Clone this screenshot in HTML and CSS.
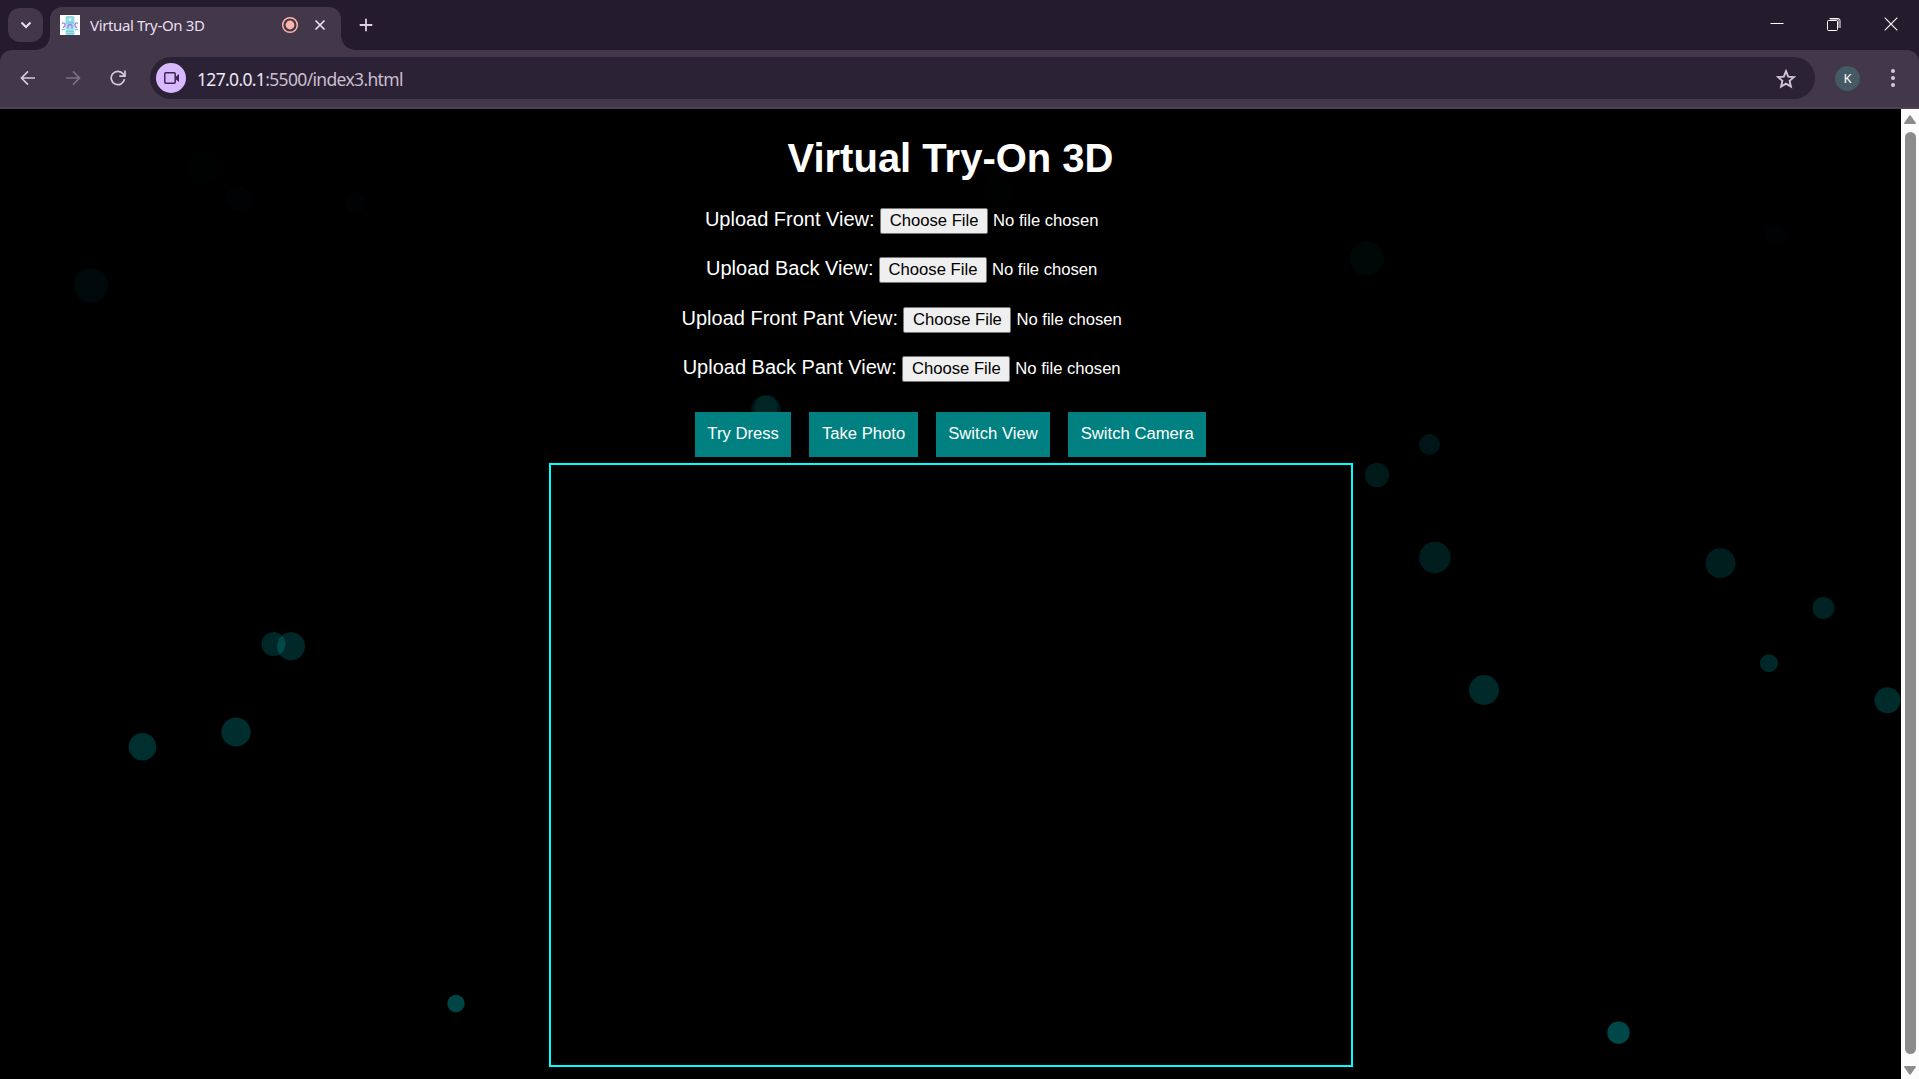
FILE: index.html
```html
<!DOCTYPE html>
<html lang="en">
<head>
<meta charset="utf-8">
<title>Virtual Try-On 3D</title>
<link rel="stylesheet" href="styles.css">
</head>
<body>
<div class="window">
  <header class="tabstrip">
    <button class="tab-search" aria-label="Search tabs"><svg width="12" height="8" viewBox="0 0 12 8"><path d="M1.500 1.500 6 6l4.500-4.500" fill="none" stroke="#e9dff0" stroke-width="2"/></svg></button>
    <div class="tab">
      <svg class="favicon" width="20" height="20" viewBox="0 0 20 20"><path fill="#fff" d="M0 0h20v20H0z"/><rect x="5.500" y="1" width="9" height="7" rx="2" fill="#8edbe3"/><path d="M5.500 8.500h9v10.500h-9z" fill="#a9e6ec"/><path d="M5.500 8h9M6 16.500h8M6 19h8M2 14.500h3M15 14.500h3" fill="none" stroke="#6fd0dc" stroke-width="1.300"/><circle cx="10" cy="4.500" r="1.500" fill="#dff6f8"/><path d="M2 8.500q2.500-1.500 3 1t-2 3M18 8.500q-2.500-1.500-3 1t2 3M8 13.500v-3q2-2 4 0v3" fill="none" stroke="#a578e8" stroke-width="1.300"/></svg>
      <span class="tab-title">Virtual Try-On 3D</span>
      <svg class="rec" width="18" height="18" viewBox="0 0 18 18"><circle cx="9" cy="9" r="7.300" fill="none" stroke="#ffb4ab" stroke-width="1.500"/><circle cx="9" cy="9" r="4.400" fill="#ffb4ab"/></svg>
      <svg class="tab-close" width="12" height="12" viewBox="0 0 12 12"><path d="m1.500 1.500 9 9m0-9-9 9" stroke="#e9dff0" stroke-width="1.700"/></svg>
    </div>
    <svg class="new-tab" width="14" height="14" viewBox="0 0 14 14"><path d="M7 .7v12.600M.7 7h12.600" stroke="#dccfe6" stroke-width="1.800"/></svg>
    <div class="controls">
      <svg width="14" height="14" viewBox="0 0 14 14"><path d="M.5 6.500h13" stroke="#fff"/></svg>
      <svg width="14" height="14" viewBox="0 0 14 14" fill="none" stroke="#fff"><path d="M3 2.500h8.500V11" stroke="#8d8792"/><rect x=".5" y="3.500" width="10" height="10" rx="1"/><path d="M2.500 1.500h8.500a2 2 0 0 1 2 2V11"/></svg>
      <svg width="14" height="14" viewBox="0 0 14 14"><path d="m.7.700 12.600 12.600m0-12.600L.7 13.300" stroke="#fff" stroke-width="1.100"/></svg>
    </div>
  </header>
  <nav class="toolbar">
    <svg class="back" width="16" height="16" viewBox="0 0 16 16"><path d="M15 8H2M8 1.300 1.500 8 8 14.700" fill="none" stroke="#d6c8e0" stroke-width="1.700"/></svg>
    <svg class="forward" width="16" height="16" viewBox="0 0 16 16"><path d="M1 8h13M8 1.300 14.500 8 8 14.700" fill="none" stroke="#7c7085" stroke-width="1.700"/></svg>
    <svg class="reload" width="16" height="16" viewBox="0 0 16 16"><path d="M14.500 9.200A6.700 6.700 0 1 1 13.300 4l1.400 1.700M15 .5v5.700H9.300" fill="none" stroke="#d6c8e0" stroke-width="1.700"/></svg>
    <div class="omnibox">
      <span class="camera"><svg width="17" height="14" viewBox="0 0 17 14"><rect x="1.800" y="1.800" width="10.400" height="10.400" rx="1" fill="none" stroke="#3b2652" stroke-width="1.500"/><path d="M12.500 6 16 3v8l-3.500-3z" fill="#3b2652"/></svg></span>
      <span class="url"><b>127.0.0.1</b>:5500/index3.html</span>
      <svg class="star" width="20" height="20" viewBox="0 0 20 20"><path d="m10 2.200 2.200 5.400 5.700.5-4.300 3.800 1.300 5.700-4.900-3-4.900 3 1.300-5.700L2.100 8.100l5.700-.5z" fill="none" stroke="#d0c4d8" stroke-width="1.900"/></svg>
    </div>
    <span class="avatar">K</span>
    <svg class="menu" width="4" height="18" viewBox="0 0 4 18" fill="#d6c8e0"><circle cx="2" cy="2" r="2"/><circle cx="2" cy="9" r="2"/><circle cx="2" cy="16" r="2"/></svg>
  </nav>
  <div class="viewport">
    <main class="page">
      <svg class="bubbles" width="1901" height="970" viewBox="0 109 1901 970">
        <circle cx="203" cy="168" r="17" fill="#000101"/><circle cx="238.500" cy="198.500" r="12.500" fill="#000203"/><circle cx="355" cy="202.500" r="10.500" fill="#000203"/>
        <circle cx="91" cy="285.500" r="17.300" fill="#00080a"/><circle cx="998" cy="191" r="15" fill="#000101"/>
        <circle cx="1367" cy="258.500" r="17.300" fill="#000707"/><circle cx="1775.500" cy="234.500" r="10.500" fill="#000304"/>
        <circle cx="766" cy="410" r="15" fill="#001515"/><circle cx="766" cy="407" r="11.500" fill="#002525"/>
        <circle cx="1429.500" cy="444.500" r="10.500" fill="#001517"/><circle cx="1377" cy="475" r="12.200" fill="#001a1a"/>
        <circle cx="1434.900" cy="557.500" r="15.700" fill="#001e1e"/><circle cx="1720.500" cy="563.200" r="15" fill="#001e1e"/>
        <circle cx="1823.500" cy="608" r="11" fill="#002222"/><circle cx="1769" cy="663.200" r="9" fill="#002828"/>
        <circle cx="1484" cy="690" r="15" fill="#002929"/><circle cx="1887.500" cy="700.300" r="13" fill="#002b2b"/>
        <circle cx="273.500" cy="644" r="12" fill="#002727"/><circle cx="291" cy="646.300" r="14" fill="#0ff" fill-opacity=".155"/>
        <circle cx="236" cy="732" r="14.600" fill="#002e2e"/><circle cx="142.500" cy="746.800" r="13.800" fill="#002f2f"/>
        <circle cx="456" cy="1003.500" r="8.700" fill="#004545"/><circle cx="1618.500" cy="1032.700" r="11.200" fill="#004747"/>
      </svg>
      <h1>Virtual Try-On 3D</h1>
      <div class="field"><label>Upload Front View:</label><div class="file"><button>Choose File</button><span>No file chosen</span></div></div>
      <div class="field"><label>Upload Back View:</label><div class="file"><button>Choose File</button><span>No file chosen</span></div></div>
      <div class="field"><label>Upload Front Pant View:</label><div class="file"><button>Choose File</button><span>No file chosen</span></div></div>
      <div class="field"><label>Upload Back Pant View:</label><div class="file"><button>Choose File</button><span>No file chosen</span></div></div>
      <div class="actions"><button>Try Dress</button><button>Take Photo</button><button>Switch View</button><button>Switch Camera</button></div>
      <div class="stage"></div>
    </main>
    <aside class="scrollbar">
      <svg width="14" height="10" viewBox="0 0 14 10"><path d="M6 1q1-1.300 2 0l4.700 6.800q.6 1.200-.7 1.200H2q-1.300 0-.7-1.200z" fill="#8b8b8b"/></svg>
      <span class="thumb"></span>
      <svg width="14" height="10" viewBox="0 0 14 10"><path d="M6 9q1 1.300 2 0l4.700-6.800Q13.300 1 12 1H2Q.7 1 1.300 2.200z" fill="#8b8b8b"/></svg>
    </aside>
  </div>
</div>
</body>
</html>
```
FILE: styles.css
```css
* { box-sizing: border-box; }
body { margin: 0; background: #000; overflow: hidden; }
button { border: 0; padding: 0; font: inherit; }
svg { display: block; flex: none; }

.window { width: 1919px; height: 1079px; display: flex; flex-direction: column; font-family: "Noto Sans", sans-serif; background: #241b2d; }
.tabstrip { height: 50px; flex: none; display: flex; align-items: flex-start; background: #241b2d; }
.tab-search { width: 35px; height: 34px; margin: 8px 7px 0 8px; border-radius: 12px; background: #42384a; display: grid; place-items: center; }
.tab { position: relative; width: 291px; height: 43px; margin-top: 7px; padding: 0 15px 7px 10px; display: flex; align-items: center; border-radius: 12px 12px 0 0; background: #42384a; }
.tab::before, .tab::after { content: ""; position: absolute; bottom: 0; width: 14px; height: 14px; }
.tab::before { left: -14px; background: radial-gradient(circle at 0 0, transparent 13.5px, #42384a 14px); }
.tab::after { right: -14px; background: radial-gradient(circle at 100% 0, transparent 13.5px, #42384a 14px); }
.tab-title { margin-left: 10px; font-size: 15px; line-height: 20px; letter-spacing: -0.36px; color: #e9dff0; white-space: nowrap; }
.rec { margin-left: auto; }
.tab-close { margin-left: 15px; }
.new-tab { margin: 18px 0 0 18px; }
.controls { margin: 17px 21px 0 auto; display: flex; gap: 43px; }

.toolbar { height: 59px; flex: none; display: flex; align-items: center; padding: 0 24.5px 1px 20px; background: #42384a; border-bottom: 2px solid #4c4254; border-radius: 12px 12px 0 0; }
.forward { margin-left: 28.5px; }
.reload { margin-left: 29px; }
.omnibox { width: 1665px; height: 42px; margin-left: 24.5px; padding: 0 19.5px 0 6px; display: flex; align-items: center; border-radius: 21px; background: #2c2235; }
.camera { width: 30px; height: 30px; border-radius: 50%; background: #d8b9ff; display: grid; place-items: center; }
.url { margin: 2px 0 0 11px; font-size: 17.5px; line-height: 24px; letter-spacing: -0.66px; color: #c9bfd0; }
.url b { font-weight: 400; color: #efe6f5; }
.star { margin: 2px 0 0 auto; }
.avatar { width: 25px; height: 25px; margin-left: 20px; border-radius: 50%; background: #455a64; color: #fff; font: 13px/25px "Noto Sans", sans-serif; text-align: center; }
.menu { margin-left: auto; }

.viewport { flex: 1; min-height: 0; display: flex; background: #000; }
.page { position: relative; width: 1901px; display: flex; flex-direction: column; align-items: center; font-family: "Liberation Sans", Arial, sans-serif; color: #fff; }
.bubbles { position: absolute; left: 0; top: 0; }
.page > :not(.bubbles) { position: relative; }
h1 { margin: 26px 0; font-size: 40px; line-height: 46px; font-weight: 700; }
.field { display: flex; align-items: center; gap: 5.5px; height: 27px; margin-bottom: 22.4px; font-size: 20px; line-height: 23px; }
.field label { padding-bottom: 2px; }
.file { width: 316px; display: flex; align-items: center; gap: 5px; padding-top: 1px; font-size: 16.67px; line-height: 20px; }
.file span { letter-spacing: -0.02px; }
.file button { width: 108px; height: 26px; border: 1px solid #767676; border-radius: 2px; background: #efefef; color: #000; }
.actions { display: flex; gap: 18px; margin-top: 7.4px; }
.actions button { height: 45px; padding: 0 12.5px 1px; background: #008080; color: #fff; font-size: 16.67px; }
.stage { width: 804px; height: 604px; margin-top: 6px; border: 2px solid #0ff; }
.scrollbar { width: 18px; padding: 6px 0 4px; display: flex; flex-direction: column; align-items: center; background: #fcfcfc; }
.thumb { width: 11px; flex: 1; margin: 7px 0 11px; border-radius: 6px; background: #8b8b8b; }
```
